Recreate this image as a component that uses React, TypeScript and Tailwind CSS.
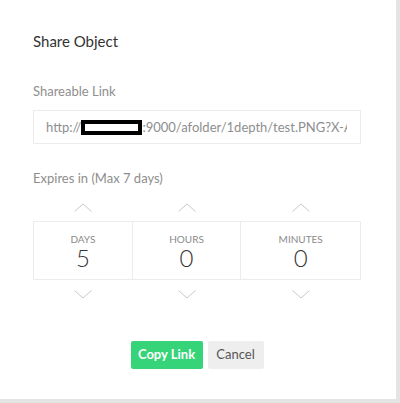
import React from "react";

const Up = () => (
  <svg width="18" height="9" viewBox="0 0 18 9" className="block">
    <path d="M0.5 8.5 L9 1 L17.5 8.5" fill="none" stroke="#c8c8c8" strokeWidth="1" />
  </svg>
);
const Down = () => (
  <svg width="18" height="9" viewBox="0 0 18 9" className="block">
    <path d="M0.5 0.5 L9 8 L17.5 0.5" fill="none" stroke="#c8c8c8" strokeWidth="1" />
  </svg>
);

const cols = [
  { label: "DAYS", value: "5", w: "w-[99px]" },
  { label: "HOURS", value: "0", w: "w-[109px]" },
  { label: "MINUTES", value: "0", w: "w-[120px]" },
];

export default function App() {
  return (
    <div
      className="w-[400px] h-[403px] bg-[#e4e4e4] overflow-hidden"
      style={{ fontFamily: "Lato, 'Open Sans', sans-serif" }}
    >
      <div className="w-[396px] h-[399px] bg-white pl-[33px] pt-[31px]">
        <div className="text-[15px] leading-[20px] text-[#333]">Share Object</div>
        <div className="mt-[31px] text-[13px] leading-[18px] text-[#8e8e8e]">Shareable Link</div>
        <div className="mt-[10px] w-[328px] h-[34px] border border-[#ececec] pl-[12px] pr-[13px] flex items-center overflow-hidden">
          <div className="whitespace-nowrap overflow-hidden text-[13px] text-[#8e8e8e] leading-[18px] flex items-center">
            <span className="shrink-0">http://</span>
            <span className="shrink-0 inline-block w-[61px] h-[15px] border-[4px] border-black bg-white"></span>
            <span className="shrink-0">:9000/afolder/1depth/test.PNG?X-Amz-Algorithm</span>
          </div>
        </div>
        <div className="mt-[25px] text-[13px] leading-[18px] text-[#8e8e8e]">Expires in (Max 7 days)</div>
        <div className="mt-[16px] flex">
          {cols.map((c) => (
            <div key={c.label} className={`${c.w} flex justify-center`}>
              <Up />
            </div>
          ))}
        </div>
        <div className="mt-[9px] flex w-[328px] h-[59px] border border-[#ececec]">
          {cols.map((c, i) => (
            <div
              key={c.label}
              className={`${i === 0 ? "w-[98px]" : c.w} flex flex-col items-center ${i > 0 ? "border-l border-[#ececec]" : ""}`}
            >
              <div className="mt-[11px] text-[10px] leading-[13px] text-[#8a8a8a]">{c.label}</div>
              <div className="mt-[-1px] text-[24px] leading-[26px] font-light text-[#333]">{c.value}</div>
            </div>
          ))}
        </div>
        <div className="mt-[10px] flex">
          {cols.map((c) => (
            <div key={c.label} className={`${c.w} flex justify-center`}>
              <Down />
            </div>
          ))}
        </div>
        <div className="mt-[42px] w-[328px] flex justify-center gap-[5px]">
          <button className="h-[28px] w-[72px] rounded-[2px] bg-[#35d478] text-white text-[13px] font-bold">
            Copy Link
          </button>
          <button className="h-[28px] w-[56px] rounded-[2px] bg-[#eeeeee] text-[#555] text-[13px]">
            Cancel
          </button>
        </div>
      </div>
    </div>
  );
}
